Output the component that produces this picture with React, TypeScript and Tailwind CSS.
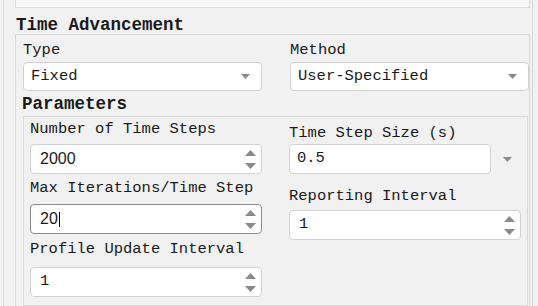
import React from 'react';

const mono = { fontFamily: '"Liberation Mono", "DejaVu Sans Mono", monospace' };

function SelectArrow() {
  return (
    <svg width="9" height="5" viewBox="0 0 9 5" className="shrink-0">
      <path d="M0 0 L9 0 L4.5 5 Z" fill="#8a8a8a" />
    </svg>
  );
}

function Spinner() {
  return (
    <div className="flex flex-col justify-between h-[19px] shrink-0">
      <svg width="11" height="6" viewBox="0 0 11 6"><path d="M0 6 L11 6 L5.5 0 Z" fill="#8a8a8a" /></svg>
      <svg width="11" height="6" viewBox="0 0 11 6"><path d="M0 0 L11 0 L5.5 6 Z" fill="#8a8a8a" /></svg>
    </div>
  );
}

function Label({ text, className = '' }: { text: string; className?: string }) {
  return (
    <div className={`h-[18px] leading-[18px] text-[15.5px] text-[#1a1a1a] whitespace-nowrap ${className}`} style={mono}>
      {text}
    </div>
  );
}

function Select({ value, className = '' }: { value: string; className?: string }) {
  return (
    <div className={`h-[29px] bg-white border border-[#d2d2d2] rounded-[4px] flex items-center pl-[7px] pr-[11px] ${className}`}>
      <span className="flex-1 text-[15.5px] text-[#1a1a1a]" style={mono}>{value}</span>
      <SelectArrow />
    </div>
  );
}

function NumberBox({ value, sans, focused, className = '' }: { value: string; sans?: boolean; focused?: boolean; className?: string }) {
  return (
    <div className={`h-[30px] bg-white rounded-[4px] flex items-center pl-[9px] pr-[5px] border ${focused ? 'border-[#8c8c8c] border-[1.5px]' : 'border-[#d2d2d2]'} ${className}`}>
      <span className="flex-1 flex items-center text-[15.5px] text-[#1a1a1a]" style={sans ? { fontFamily: '"Liberation Sans", Arial, sans-serif', fontSize: 16 } : mono}>
        {value}
        {focused && <span className="inline-block w-[1px] h-[15px] bg-black ml-[1px]" />}
      </span>
      <Spinner />
    </div>
  );
}

export default function App() {
  return (
    <div className="w-[538px] h-[306px] overflow-hidden bg-[#f1f1f1] pl-[3px] pr-[5px]">
      <div className="h-[400px] border-x border-[#d6d6d6] pl-[11px] pr-[2px]">
        <div className="h-[8px] bg-[#f6f6f6] border-x border-b border-[#dadada]" />

        <div className="h-[26px] pt-[7px] pl-[1px] leading-[20px] text-[17.5px] font-bold text-[#1a1a1a]" style={mono}>
          Time Advancement
        </div>

        <div className="border border-[#dadada] h-[300px] pl-[7px]">
          <div className="grid grid-cols-[239px_239px] gap-x-[28px] pt-[6px]">
            <div>
              <Label text="Type" />
              <Select value="Fixed" className="mt-[3px]" />
            </div>
            <div>
              <Label text="Method" />
              <Select value="User-Specified" className="mt-[3px]" />
            </div>
          </div>

          <div className="mt-[3px] -ml-[1px] h-[20px] leading-[20px] text-[17.5px] font-bold text-[#1a1a1a]" style={mono}>
            Parameters
          </div>

          <div className="mt-[2px] mr-[1px] h-[190px] border border-[#dadada] pl-[6px] flex gap-[27px]">
            <div className="w-[232px] flex flex-col">
              <Label text="Number of Time Steps" className="mt-[3px]" />
              <NumberBox value="2000" sans className="mt-[6px]" />
              <Label text="Max Iterations/Time Step" className="mt-[5px]" />
              <NumberBox value="20" sans focused className="mt-[7px] h-[29px]" />
              <Label text="Profile Update Interval" className="mt-[6px]" />
              <NumberBox value="1" className="mt-[9px]" />
            </div>
            <div className="w-[232px] flex flex-col">
              <Label text="Time Step Size (s)" className="mt-[7px]" />
              <div className="mt-[2px] flex items-center">
                <div className="w-[202px] h-[30px] bg-white border border-[#d2d2d2] rounded-[4px] flex items-center pl-[7px]">
                  <span className="text-[15.5px] text-[#1a1a1a]" style={mono}>0.5</span>
                </div>
                <div className="ml-[12px]"><SelectArrow /></div>
              </div>
              <Label text="Reporting Interval" className="mt-[13px]" />
              <NumberBox value="1" className="mt-[5px]" />
            </div>
          </div>
        </div>
      </div>
    </div>
  );
}
